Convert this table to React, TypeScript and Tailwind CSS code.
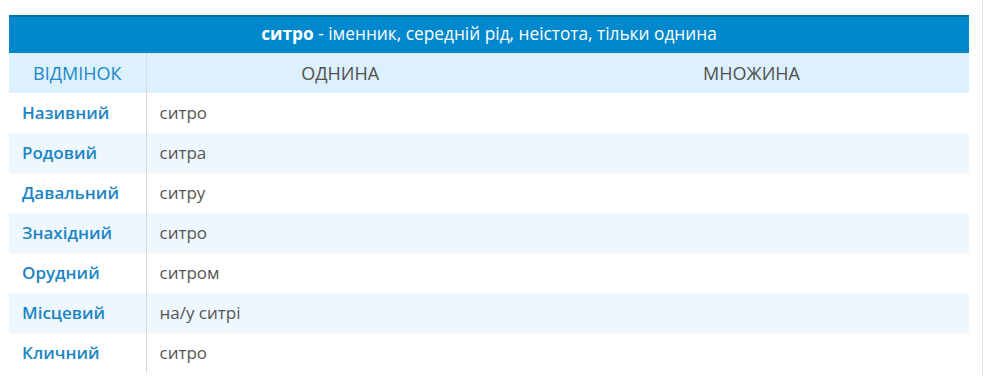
const rows: [string, string][] = [
  ["Називний", "ситро"],
  ["Родовий", "ситра"],
  ["Давальний", "ситру"],
  ["Знахідний", "ситро"],
  ["Орудний", "ситром"],
  ["Місцевий", "на/у ситрі"],
  ["Кличний", "ситро"],
];

export default function App() {
  return (
    <div className="h-[376px] w-[990px] bg-white font-['Open_Sans',sans-serif]">
      <div className="h-full w-[983px] border-r border-[#e6e6e6] pt-[15px] pl-[9px]">
        <table className="w-[960px] table-fixed border-collapse text-[17px]">
          <colgroup>
            <col className="w-[137px]" />
            <col className="w-[388px]" />
            <col />
          </colgroup>
          <thead>
            <tr>
              <th
                colSpan={3}
                className="h-[37px] border-t-2 border-[#0070a8] bg-[#0088cc] pb-[3px] text-center text-[17.3px] font-normal text-white"
              >
                <b className="font-bold">ситро</b> - іменник, середній рід, неістота, тільки однина
              </th>
            </tr>
            <tr className="h-[40px] bg-[#dcf0fd] text-[18px]">
              <th className="border-r border-[#d8d8d8] font-normal text-[#1a88c9]">ВІДМІНОК</th>
              <th className="font-normal text-[#505050]">ОДНИНА</th>
              <th className="font-normal text-[#505050]">МНОЖИНА</th>
            </tr>
          </thead>
          <tbody>
            {rows.map(([c, s], i) => (
              <tr key={c} className={`h-[40px] ${i % 2 ? "bg-[#eff7fe]" : "bg-white"}`}>
                <td className="border-r border-[#d8d8d8] pl-[13px] font-semibold text-[#1b85c4]">{c}</td>
                <td className="pl-[13px] text-[#555]">{s}</td>
                <td />
              </tr>
            ))}
          </tbody>
        </table>
      </div>
    </div>
  );
}
